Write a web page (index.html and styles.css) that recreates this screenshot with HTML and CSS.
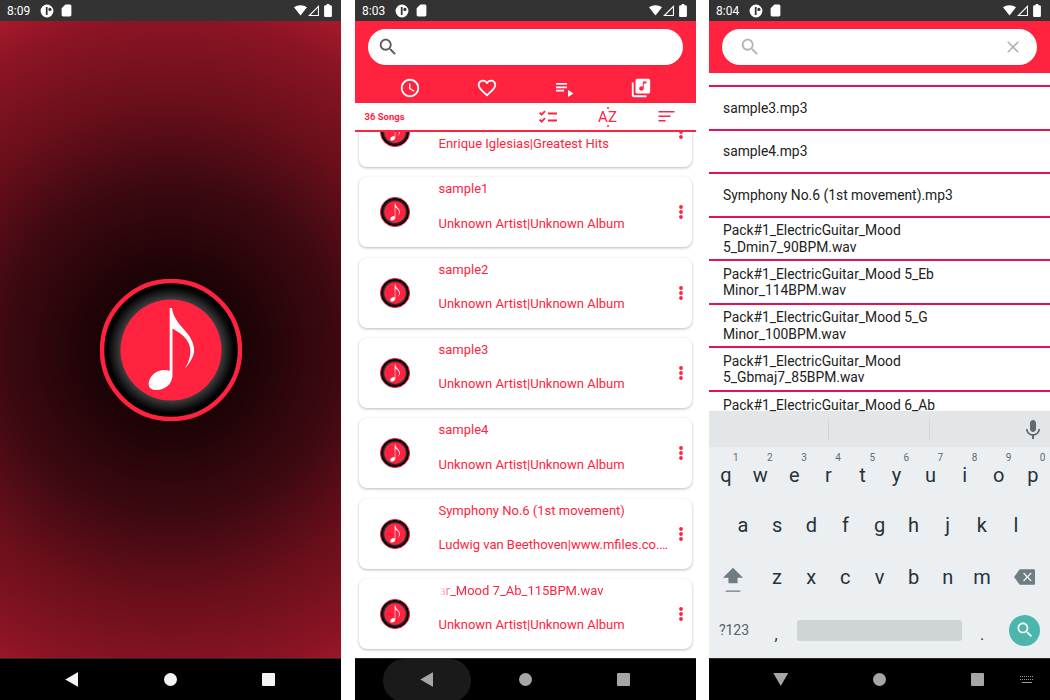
FILE: index.html
```html
<!DOCTYPE html>
<html lang="en">
<head>
  <meta charset="UTF-8" />
  <title>Music Player Screens</title>
  <link rel="stylesheet" href="styles.css">
</head>
<body>

  <!-- shared icons -->
  <svg class="sprite" xmlns="http://www.w3.org/2000/svg">
    <defs>
      <radialGradient id="ring-fill">
        <stop offset="0.73" stop-color="#3e3e3e" />
        <stop offset="0.92" stop-color="#000" />
      </radialGradient>
    </defs>
    <symbol id="logo" viewBox="19 19 142 142">
      <circle cx="90" cy="90" r="69" fill="url(#ring-fill)" stroke="#ff2340" stroke-width="4.5" />
      <circle cx="90" cy="90" r="50.5" fill="#ff2340" />
      <path fill="#fff" d="M88.7 48L91 48C92 58 100 66 106 73C112 80 115 90 112 96C110 101 107 105 104 108.500C109 100 111 92 108 84C105 76 97 72 91.500 68.500L91.500 116C91 125 82 131 74 130C67 129.500 66 123 70 117C74 111 83 108.500 88.7 111Z" />
    </symbol>
    <symbol id="badge" viewBox="0 0 24 24">
      <path fill-rule="evenodd" d="M12 1a11 11 0 1 0 0 22a11 11 0 0 0 0-22zM10 5h3v14h-3zM17 6.500a2.800 2.800 0 1 1 0 5.600a2.800 2.800 0 0 1 0-5.600z" />
    </symbol>
    <symbol id="sdcard" viewBox="0 0 24 24">
      <path d="M18 1h-8L3 8v12c0 1.700 1.300 3 3 3h12c1.700 0 3-1.300 3-3V4c0-1.700-1.300-3-3-3z" />
    </symbol>
    <symbol id="wifi" viewBox="0 0 24 20">
      <path d="M12 19L0 4c6.500-5 17.500-5 24 0z" />
    </symbol>
    <symbol id="signal" viewBox="0 0 20 20">
      <path fill-rule="evenodd" d="M20 0v20H0zM18 5L5 18h13z" />
    </symbol>
    <symbol id="battery" viewBox="0 0 12 20">
      <path d="M4 0h4v2h2c1 0 2 1 2 2v14c0 1-1 2-2 2H2c-1 0-2-1-2-2V4c0-1 1-2 2-2h2z" />
    </symbol>
    <symbol id="search" viewBox="0 0 24 24">
      <path d="M15.500 14h-.79l-.28-.27C15.410 12.590 16 11.110 16 9.500 16 5.910 13.090 3 9.500 3S3 5.910 3 9.500 5.910 16 9.500 16c1.610 0 3.090-.59 4.230-1.570l.27.28v.79l5 4.990L20.490 19l-4.990-5zm-6 0C7.010 14 5 11.990 5 9.500S7.010 5 9.500 5 14 7.010 14 9.500 11.990 14 9.500 14z" />
    </symbol>
    <symbol id="close" viewBox="0 0 24 24">
      <path d="M19 6.410L17.590 5 12 10.590 6.410 5 5 6.410 10.590 12 5 17.590 6.410 19 12 13.410 17.590 19 19 17.590 13.410 12z" />
    </symbol>
    <symbol id="clock" viewBox="0 0 24 24">
      <path d="M11.990 2C6.470 2 2 6.480 2 12s4.470 10 9.990 10C17.520 22 22 17.520 22 12S17.520 2 11.990 2zM12 20c-4.420 0-8-3.580-8-8s3.580-8 8-8 8 3.580 8 8-3.580 8-8 8z" />
      <path d="M12.500 7H11v6l5.250 3.150.75-1.230-4.500-2.670z" />
    </symbol>
    <symbol id="heart" viewBox="0 0 24 24">
      <path d="M16.500 3c-1.740 0-3.410.81-4.500 2.090C10.910 3.810 9.240 3 7.500 3 4.420 3 2 5.420 2 8.500c0 3.780 3.400 6.860 8.550 11.540L12 21.350l1.450-1.320C18.600 15.360 22 12.280 22 8.500 22 5.420 19.580 3 16.500 3zm-4.400 15.550l-.1.1-.1-.1C7.140 14.240 4 11.390 4 8.500 4 6.500 5.500 5 7.500 5c1.540 0 3.040.99 3.570 2.360h1.870C13.460 5.990 14.960 5 16.500 5c2 0 3.500 1.500 3.500 3.500 0 2.890-3.140 5.740-7.900 10.050z" />
    </symbol>
    <symbol id="queue" viewBox="0 0 18 14">
      <path d="M0 0h11v1.800H0zM0 3.400h11v1.800H0zM0 6.800h8v1.800H0zM12 7l5.500 3.500L12 14z" />
    </symbol>
    <symbol id="album" viewBox="0 0 24 24">
      <path d="M20 2H8c-1.100 0-2 .9-2 2v12c0 1.100.9 2 2 2h12c1.100 0 2-.9 2-2V4c0-1.100-.9-2-2-2zm-2 5h-3v5.500c0 1.380-1.120 2.500-2.500 2.500S10 13.880 10 12.500s1.120-2.500 2.500-2.500c.57 0 1.080.19 1.500.51V5h4v2zM4 6H2v14c0 1.100.9 2 2 2h14v-2H4V6z" />
    </symbol>
    <symbol id="checklist" viewBox="0 0 18 14">
      <path fill="none" stroke="#ff2340" stroke-width="1.800" d="M.6 2.700l2 2L6 1.200M.6 9.700l2 2L6 8.200M9 3.500h9M9 10.500h9" />
    </symbol>
    <symbol id="sort" viewBox="0 0 16 14">
      <path d="M0 1h16v1.500H0zM0 5.500h12V7H0zM0 10h7v1.500H0z" />
    </symbol>
    <symbol id="dots" viewBox="0 0 4 14">
      <circle cx="2" cy="2" r="1.900" />
      <circle cx="2" cy="7" r="1.900" />
      <circle cx="2" cy="12" r="1.900" />
    </symbol>
    <symbol id="mic" viewBox="0 0 24 24">
      <path d="M12 14c1.660 0 3-1.340 3-3V5c0-1.660-1.340-3-3-3S9 3.340 9 5v6c0 1.660 1.340 3 3 3z" />
      <path d="M17.300 11c0 3-2.540 5.100-5.300 5.100S6.700 14 6.700 11H5c0 3.410 2.720 6.230 6 6.720V21h2v-3.280c3.280-.48 6-3.300 6-6.720h-1.700z" />
    </symbol>
    <symbol id="shift" viewBox="0 0 22 28">
      <path d="M11 0L22 11H16V17H6V11H0zM3 25h16v1.500H3z" />
    </symbol>
    <symbol id="backspace" viewBox="0 0 22 16">
      <path fill-rule="evenodd" d="M6 0h15c.6 0 1 .4 1 1v14c0 .6-.4 1-1 1H6L0 8zM9.500 4.300l3.400 3.700-3.400 3.700 1 1 3.500-3.600 3.500 3.600 1-1L15 8l3.500-3.700-1-1L14 6.900l-3.500-3.600z" />
    </symbol>
  </svg>

  <div class="screens">

    <!-- splash -->
    <section class="phone">
      <div class="status">
        <span class="clock-text">8:09</span>
        <svg class="st-badge"><use href="#badge" /></svg>
        <svg class="st-sd"><use href="#sdcard" /></svg>
        <span class="status-right">
          <svg class="st-wifi"><use href="#wifi" /></svg>
          <svg class="st-signal"><use href="#signal" /></svg>
          <svg class="st-battery"><use href="#battery" /></svg>
        </span>
      </div>
      <div class="splash">
        <svg class="splash-logo"><use href="#logo" /></svg>
      </div>
      <nav class="navbar nav-white">
        <span class="nav-btn"><i class="nav-back"></i></span>
        <span class="nav-btn"><i class="nav-home"></i></span>
        <span class="nav-btn"><i class="nav-recent"></i></span>
      </nav>
    </section>

    <!-- song list -->
    <section class="phone">
      <div class="status">
        <span class="clock-text">8:03</span>
        <svg class="st-badge"><use href="#badge" /></svg>
        <svg class="st-sd"><use href="#sdcard" /></svg>
        <span class="status-right">
          <svg class="st-wifi"><use href="#wifi" /></svg>
          <svg class="st-signal"><use href="#signal" /></svg>
          <svg class="st-battery"><use href="#battery" /></svg>
        </span>
      </div>
      <header class="head head-tall">
        <div class="search-pill">
          <svg class="search-icon dark"><use href="#search" /></svg>
        </div>
        <div class="tabs">
          <span class="tab"><svg class="tab-clock"><use href="#clock" /></svg></span>
          <span class="tab"><svg class="tab-heart"><use href="#heart" /></svg></span>
          <span class="tab"><svg class="tab-queue"><use href="#queue" /></svg></span>
          <span class="tab"><svg class="tab-album"><use href="#album" /></svg></span>
        </div>
      </header>
      <div class="toolbar">
        <span class="song-count">36 Songs</span>
        <svg class="tool-check"><use href="#checklist" /></svg>
        <span class="tool-az">AZ</span>
        <svg class="tool-sort"><use href="#sort" /></svg>
      </div>
      <div class="songs">
        <div class="songs-inner">
          <article class="card">
            <svg class="avatar"><use href="#logo" /></svg>
            <div class="info"><p>&nbsp;</p><p>Enrique Iglesias|Greatest Hits</p></div>
            <svg class="more"><use href="#dots" /></svg>
          </article>
          <article class="card">
            <svg class="avatar"><use href="#logo" /></svg>
            <div class="info"><p>sample1</p><p>Unknown Artist|Unknown Album</p></div>
            <svg class="more"><use href="#dots" /></svg>
          </article>
          <article class="card">
            <svg class="avatar"><use href="#logo" /></svg>
            <div class="info"><p>sample2</p><p>Unknown Artist|Unknown Album</p></div>
            <svg class="more"><use href="#dots" /></svg>
          </article>
          <article class="card">
            <svg class="avatar"><use href="#logo" /></svg>
            <div class="info"><p>sample3</p><p>Unknown Artist|Unknown Album</p></div>
            <svg class="more"><use href="#dots" /></svg>
          </article>
          <article class="card">
            <svg class="avatar"><use href="#logo" /></svg>
            <div class="info"><p>sample4</p><p>Unknown Artist|Unknown Album</p></div>
            <svg class="more"><use href="#dots" /></svg>
          </article>
          <article class="card">
            <svg class="avatar"><use href="#logo" /></svg>
            <div class="info"><p>Symphony No.6 (1st movement)</p><p>Ludwig van Beethoven|www.mfiles.co.uk</p></div>
            <svg class="more"><use href="#dots" /></svg>
          </article>
          <article class="card">
            <svg class="avatar"><use href="#logo" /></svg>
            <div class="info"><p class="marquee">ar_Mood 7_Ab_115BPM.wav</p><p>Unknown Artist|Unknown Album</p></div>
            <svg class="more"><use href="#dots" /></svg>
          </article>
        </div>
      </div>
      <nav class="navbar nav-grey">
        <span class="nav-btn nav-pressed"><i class="nav-back"></i></span>
        <span class="nav-btn"><i class="nav-home"></i></span>
        <span class="nav-btn"><i class="nav-recent"></i></span>
      </nav>
    </section>

    <!-- search with keyboard -->
    <section class="phone">
      <div class="status">
        <span class="clock-text">8:04</span>
        <svg class="st-badge"><use href="#badge" /></svg>
        <svg class="st-sd"><use href="#sdcard" /></svg>
        <span class="status-right">
          <svg class="st-wifi"><use href="#wifi" /></svg>
          <svg class="st-signal"><use href="#signal" /></svg>
          <svg class="st-battery"><use href="#battery" /></svg>
        </span>
      </div>
      <header class="head head-short">
        <div class="search-pill pill-active">
          <svg class="search-icon light"><use href="#search" /></svg>
          <svg class="clear-icon"><use href="#close" /></svg>
        </div>
      </header>
      <ul class="results">
        <li>sample3.mp3</li>
        <li>sample4.mp3</li>
        <li>Symphony No.6 (1st movement).mp3</li>
        <li>Pack#1_ElectricGuitar_Mood 5_Dmin7_90BPM.wav</li>
        <li>Pack#1_ElectricGuitar_Mood 5_Eb Minor_114BPM.wav</li>
        <li>Pack#1_ElectricGuitar_Mood 5_G Minor_100BPM.wav</li>
        <li>Pack#1_ElectricGuitar_Mood 5_Gbmaj7_85BPM.wav</li>
        <li class="result-cut">Pack#1_ElectricGuitar_Mood 6_Ab</li>
      </ul>
      <div class="keyboard">
        <div class="suggest">
          <span class="suggest-cell"></span>
          <span class="suggest-cell"></span>
          <span class="suggest-mic"><svg class="mic"><use href="#mic" /></svg></span>
        </div>
        <div class="keys">
          <div class="key-row">
            <span class="key">q<sup>1</sup></span><span class="key">w<sup>2</sup></span><span class="key">e<sup>3</sup></span><span class="key">r<sup>4</sup></span><span class="key">t<sup>5</sup></span><span class="key">y<sup>6</sup></span><span class="key">u<sup>7</sup></span><span class="key">i<sup>8</sup></span><span class="key">o<sup>9</sup></span><span class="key">p<sup>0</sup></span>
          </div>
          <div class="key-row row-home">
            <span class="key">a</span><span class="key">s</span><span class="key">d</span><span class="key">f</span><span class="key">g</span><span class="key">h</span><span class="key">j</span><span class="key">k</span><span class="key">l</span>
          </div>
          <div class="key-row">
            <span class="key key-wide key-shift"><svg class="shift"><use href="#shift" /></svg></span>
            <span class="key">z</span><span class="key">x</span><span class="key">c</span><span class="key">v</span><span class="key">b</span><span class="key">n</span><span class="key">m</span>
            <span class="key key-wide"><svg class="backspace"><use href="#backspace" /></svg></span>
          </div>
          <div class="key-row row-bottom">
            <span class="key key-num">?123</span>
            <span class="key key-punct">,</span>
            <span class="key key-space"><i class="spacebar"></i></span>
            <span class="key key-punct">.</span>
            <span class="key key-go"><i class="go-btn"><svg class="go-icon"><use href="#search" /></svg></i></span>
          </div>
        </div>
      </div>
      <nav class="navbar nav-grey">
        <span class="nav-btn"><i class="nav-hide"></i></span>
        <span class="nav-btn"><i class="nav-home"></i></span>
        <span class="nav-btn"><i class="nav-recent"></i></span>
        <span class="nav-kbd"><i class="kbd-switch"></i></span>
      </nav>
    </section>

  </div>

</body>
</html>
```

FILE: styles.css
```css
* {
  box-sizing: border-box;
}
body {
  margin: 0;
  background: #fff;
  font-family: Roboto, "Liberation Sans", sans-serif;
}
p {
  margin: 0;
}
svg {
  display: block;
  fill: currentColor;
}
.sprite {
  width: 0;
  height: 0;
}
.screens {
  display: flex;
  width: 1050px;
  height: 700px;
  overflow: hidden;
}
.phone {
  width: 341px;
  height: 700px;
  flex: none;
  display: flex;
  flex-direction: column;
  background: #fff;
  overflow: hidden;
}
.phone:nth-child(2) {
  margin: 0 13px 0 14px;
}

/* status bar */
.status {
  height: 21px;
  flex: none;
  display: flex;
  align-items: center;
  padding: 0 7px;
  background: #333;
  color: #fff;
  font-size: 12px;
}
.clock-text {
  width: 33px;
}
.st-badge {
  width: 14px;
  height: 14px;
}
.st-sd {
  width: 13px;
  height: 13px;
  margin-left: 6px;
}
.status-right {
  margin-left: auto;
  display: flex;
  align-items: center;
}
.st-wifi {
  width: 13px;
  height: 11px;
}
.st-signal {
  width: 11px;
  height: 11px;
  margin-left: 1px;
}
.st-battery {
  width: 8px;
  height: 13px;
  margin: 0 2px 0 5px;
}

/* nav bar */
.navbar {
  height: 42px;
  flex: none;
  display: flex;
  padding-left: 22.5px;
  background: #000;
  border-top: 1px solid #2a2a2a;
}
.nav-white {
  color: #f4f4f4;
}
.nav-grey {
  color: #a6a6a6;
}
.nav-btn {
  width: 98.5px;
  display: flex;
  align-items: center;
  justify-content: center;
}
.nav-pressed {
  position: relative;
}
.nav-pressed::before {
  content: "";
  position: absolute;
  left: 5px;
  right: 5px;
  top: 0;
  bottom: -2px;
  border-radius: 21px;
  background: #1a1a1a;
}
.nav-back {
  position: relative;
  width: 13px;
  height: 15px;
  background: currentColor;
  clip-path: polygon(100% 0, 100% 100%, 0 50%);
}
.nav-hide {
  width: 15px;
  height: 13px;
  background: currentColor;
  clip-path: polygon(0 0, 100% 0, 50% 100%);
}
.nav-home {
  width: 13px;
  height: 13px;
  border-radius: 50%;
  background: currentColor;
}
.nav-recent {
  width: 13px;
  height: 13px;
  border-radius: 1px;
  background: currentColor;
}
.nav-kbd {
  width: 46px;
  margin-left: -23.5px;
  display: flex;
  align-items: center;
  justify-content: center;
}
.kbd-switch {
  width: 14px;
  height: 7px;
  background:
    repeating-linear-gradient(90deg, #999 0 1px, transparent 1px 2px) 0 0 / 100% 1px no-repeat,
    repeating-linear-gradient(90deg, #999 0 1px, transparent 1px 2px) 0 3px / 100% 1px no-repeat,
    linear-gradient(#999, #999) 2px 6px / 10px 1px no-repeat;
}

/* splash */
.splash {
  flex: 1;
  display: flex;
  align-items: center;
  justify-content: center;
  padding-top: 21px;
  background: radial-gradient(circle 372px at 170px 329px, #000 0, #1c0306 20%, #3f0911 46%, #6a0f1b 67%, #8c1424 89%, #a81a2c 100%);
}
.splash-logo {
  width: 142px;
  height: 142px;
}

/* header */
.head {
  flex: none;
  background: #ff2340;
  color: #fff;
  padding: 8px 13px 0;
}
.head-tall {
  height: 82px;
}
.head-short {
  height: 52px;
}
.search-pill {
  height: 36px;
  border-radius: 18px;
  background: #fff;
  display: flex;
  align-items: center;
  padding: 0 9px;
  box-shadow: 0 1px 0 rgba(0, 0, 0, 0.06);
}
.search-icon {
  width: 22px;
  height: 22px;
}
.search-icon.dark {
  color: #5a5a5a;
}
.search-icon.light {
  color: #b4b4b4;
  margin-left: 8px;
}
.clear-icon {
  width: 20px;
  height: 20px;
  margin-left: auto;
  margin-right: 5px;
  color: #b4b4b4;
}
.tabs {
  display: grid;
  grid-template-columns: repeat(4, 77px);
  margin: 8px 0 0 3.5px;
}
.tab {
  height: 30px;
  display: flex;
  align-items: center;
  justify-content: center;
}
.tab-clock,
.tab-heart {
  width: 22px;
  height: 22px;
}
.tab-queue {
  width: 18px;
  height: 14px;
  margin: 3px 0 0 2px;
}
.tab-album {
  width: 22px;
  height: 22px;
}

/* toolbar */
.toolbar {
  height: 29px;
  flex: none;
  display: flex;
  align-items: center;
  padding: 1px 0 0 9.5px;
  border-bottom: 2px solid #ff2340;
  color: #ff2340;
  position: relative;
  z-index: 1;
  background: #fff;
}
.song-count {
  width: 174px;
  margin-top: -2px;
  font-size: 9.5px;
  font-weight: 700;
}
.tool-check {
  width: 18px;
  height: 14px;
}
.tool-az {
  width: 20px;
  margin-left: 41px;
  font-size: 15px;
  text-align: center;
  position: relative;
}
.tool-az::before,
.tool-az::after {
  content: "";
  position: absolute;
  left: 9px;
  width: 2px;
  height: 2px;
  border-radius: 50%;
  background: #ff2340;
}
.tool-az::before {
  top: -1px;
}
.tool-az::after {
  bottom: -1px;
}
.tool-sort {
  width: 17px;
  height: 14px;
  margin-left: 40px;
}

/* song cards */
.songs {
  flex: 1;
  overflow: hidden;
  min-height: 0;
}
.songs-inner {
  display: flex;
  flex-direction: column;
  gap: 10.33px;
  margin-top: -35px;
  padding: 0 4px;
}
.card {
  height: 70px;
  flex: none;
  display: flex;
  align-items: center;
  padding-left: 21px;
  border-radius: 8px;
  background: #fff;
  box-shadow: 0 1px 3px rgba(0, 0, 0, 0.28);
  color: #ff2340;
}
.avatar {
  width: 30px;
  height: 30px;
  flex: none;
}
.info {
  width: 230px;
  margin-left: 28.5px;
  height: 70px;
  padding-top: 3px;
  font-size: 13px;
  line-height: 17px;
}
.info p {
  white-space: nowrap;
  overflow: hidden;
  text-overflow: ellipsis;
}
.info p + p {
  margin-top: 17.5px;
}
.marquee {
  -webkit-mask-image: linear-gradient(90deg, transparent 0, #000 14px);
  mask-image: linear-gradient(90deg, transparent 0, #000 14px);
}
.more {
  width: 4px;
  height: 14px;
  margin-left: 10px;
}

/* search results */
.results {
  flex: 1;
  min-height: 0;
  overflow: hidden;
  list-style: none;
  margin: 12px 0 0;
  padding: 0;
  border-top: 2px solid #e4124f;
}
.results li {
  height: 43.5px;
  display: flex;
  align-items: center;
  padding: 0.5px 14px 0;
  border-bottom: 2px solid #e4124f;
  font-size: 13.85px;
  line-height: 16.5px;
  color: #212121;
}
.results .result-cut {
  align-items: flex-start;
  padding-top: 5px;
}

/* keyboard */
.keyboard {
  height: 246px;
  flex: none;
  background: #eceff1;
  color: #263238;
  box-shadow: 0 -1px 1px rgba(0, 0, 0, 0.1);
  position: relative;
}
.suggest {
  height: 35px;
  display: flex;
  align-items: center;
  background: #e3e6e8;
}
.suggest-cell {
  width: 101px;
  height: 21px;
  border-right: 1px solid #d2d6d8;
}
.suggest-cell:first-child {
  width: 120px;
}
.suggest-mic {
  margin-left: auto;
  margin-right: 5px;
}
.mic {
  width: 24px;
  height: 24px;
  color: #5f6b70;
}
.keys {
  display: grid;
  grid-template-rows: 50px 50px 54px 52px;
  padding-top: 3px;
}
.key-row {
  display: flex;
  align-items: center;
}
.row-home {
  padding: 0 17px;
}
.key {
  flex: 1;
  height: 100%;
  display: flex;
  align-items: center;
  justify-content: center;
  font-size: 20px;
  position: relative;
}
.key sup {
  position: absolute;
  top: 2px;
  left: 24px;
  font-size: 10px;
  line-height: 12px;
  color: #5f6b70;
}
.key-wide {
  flex: 0 0 51px;
}
.key-shift {
  padding-right: 3px;
}
.shift {
  width: 20px;
  height: 27px;
  color: #6f7c81;
  margin-top: 7px;
}
.backspace {
  width: 21px;
  height: 16px;
  color: #6f7c81;
}
.row-bottom .key {
  flex: none;
}
.key-num {
  width: 50px;
  font-size: 14px;
  color: #56636a;
}
.key-punct {
  width: 34px;
  font-size: 16px;
  padding-top: 8px;
}
.key-space {
  width: 172px;
}
.spacebar {
  width: 165px;
  height: 21px;
  border-radius: 3px;
  background: #cfd4d6;
}
.key-go {
  width: 51px;
}
.go-btn {
  width: 31px;
  height: 31px;
  border-radius: 50%;
  background: #4db6ac;
  color: #fff;
  display: flex;
  align-items: center;
  justify-content: center;
}
.go-icon {
  width: 20px;
  height: 20px;
}
```
